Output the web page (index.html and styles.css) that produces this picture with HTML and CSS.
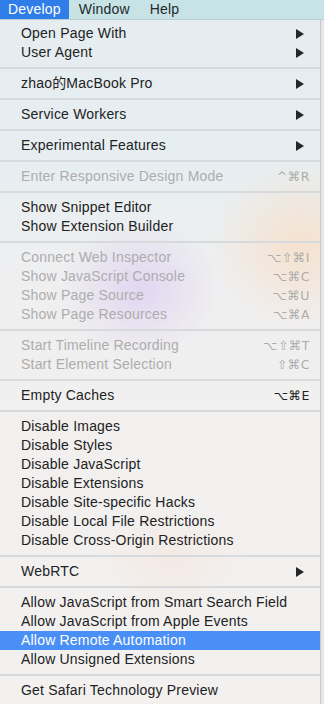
FILE: index.html
```html
<!DOCTYPE html>
<html>
<head>
<meta charset="utf-8">
<link rel="stylesheet" href="styles.css">
</head>
<body>
<div class="menubar">
  <span class="mb-item active">Develop</span>
  <span class="mb-item">Window</span>
  <span class="mb-item">Help</span>
</div>
<div class="screen">
  <div class="menu">
    <div class="item"><span class="label">Open Page With</span><span class="arrow"></span></div>
    <div class="item"><span class="label">User Agent</span><span class="arrow"></span></div>
    <div class="sep"></div>
    <div class="item"><span class="label">zhao的MacBook Pro</span><span class="arrow"></span></div>
    <div class="sep"></div>
    <div class="item"><span class="label">Service Workers</span><span class="arrow"></span></div>
    <div class="sep"></div>
    <div class="item"><span class="label">Experimental Features</span><span class="arrow"></span></div>
    <div class="sep"></div>
    <div class="item disabled"><span class="label">Enter Responsive Design Mode</span><span class="key">^⌘R</span></div>
    <div class="sep"></div>
    <div class="item"><span class="label">Show Snippet Editor</span></div>
    <div class="item"><span class="label">Show Extension Builder</span></div>
    <div class="sep"></div>
    <div class="item disabled"><span class="label">Connect Web Inspector</span><span class="key">⌥⇧⌘I</span></div>
    <div class="item disabled"><span class="label">Show JavaScript Console</span><span class="key">⌥⌘C</span></div>
    <div class="item disabled"><span class="label">Show Page Source</span><span class="key">⌥⌘U</span></div>
    <div class="item disabled"><span class="label">Show Page Resources</span><span class="key">⌥⌘A</span></div>
    <div class="sep"></div>
    <div class="item disabled"><span class="label">Start Timeline Recording</span><span class="key">⌥⇧⌘T</span></div>
    <div class="item disabled"><span class="label">Start Element Selection</span><span class="key">⇧⌘C</span></div>
    <div class="sep"></div>
    <div class="item"><span class="label">Empty Caches</span><span class="key">⌥⌘E</span></div>
    <div class="sep"></div>
    <div class="item"><span class="label">Disable Images</span></div>
    <div class="item"><span class="label">Disable Styles</span></div>
    <div class="item"><span class="label">Disable JavaScript</span></div>
    <div class="item"><span class="label">Disable Extensions</span></div>
    <div class="item"><span class="label">Disable Site-specific Hacks</span></div>
    <div class="item"><span class="label">Disable Local File Restrictions</span></div>
    <div class="item"><span class="label">Disable Cross-Origin Restrictions</span></div>
    <div class="sep"></div>
    <div class="item"><span class="label">WebRTC</span><span class="arrow"></span></div>
    <div class="sep"></div>
    <div class="item"><span class="label">Allow JavaScript from Smart Search Field</span></div>
    <div class="item"><span class="label">Allow JavaScript from Apple Events</span></div>
    <div class="item selected"><span class="label">Allow Remote Automation</span></div>
    <div class="item"><span class="label">Allow Unsigned Extensions</span></div>
    <div class="sep"></div>
    <div class="item"><span class="label">Get Safari Technology Preview</span></div>
  </div>
  <div class="behind"></div>
</div>
</body>
</html>
```
FILE: styles.css
```css
html, body {
  margin: 0;
  padding: 0;
}
body {
  width: 324px;
  height: 704px;
  overflow: hidden;
  font-family: "Liberation Sans", Arial, "Noto Sans CJK SC", sans-serif;
  font-size: 14px;
  letter-spacing: 0.2px;
  color: #222;
  background: #eef0f0;
}
.menubar {
  height: 20px;
  display: flex;
  align-items: stretch;
  background: #c8e3e6;
  box-sizing: border-box;
  border-bottom: 1px solid #b9cfd3;
}
.mb-item {
  display: flex;
  align-items: center;
  padding: 0 10px;
  color: #1e2a2c;
  line-height: 19px;
}
.mb-item.active {
  padding: 0 8px 0 8px;
  background: #2f7de8;
  color: #fff;
}
.screen {
  display: flex;
  height: 684px;
}
.menu {
  width: 320px;
  padding-top: 4px;
  border-right: 1px solid #c9c9c9;
  background:
    radial-gradient(ellipse 80px 70px at 140px 270px, rgba(216, 198, 242, 0.6), rgba(216, 198, 242, 0) 100%),
    radial-gradient(ellipse 90px 85px at 300px 225px, rgba(250, 218, 188, 0.65), rgba(250, 218, 188, 0) 100%),
    radial-gradient(ellipse 80px 50px at 170px 540px, rgba(248, 225, 215, 0.45), rgba(248, 225, 215, 0) 100%),
    linear-gradient(180deg, #e5edf1 0px, #e6eef1 130px, #efeff0 260px, #f1f0ef 400px, #f2f1f0 684px);
}
.behind {
  flex: 1;
  background: #e4e6e8;
}
.item {
  height: 19px;
  line-height: 19px;
  display: flex;
  align-items: center;
  padding: 0 13px 0 21px;
  white-space: nowrap;
}
.label {
  flex: 1;
}
.item.disabled {
  color: #adadad;
}
.item.selected {
  background: #4a8ff6;
  color: #fff;
}
.key {
  font-family: "DejaVu Sans", sans-serif;
  font-size: 12.5px;
  letter-spacing: 0.5px;
  margin-right: -3px;
}
.arrow {
  width: 0;
  height: 0;
  border-top: 5px solid transparent;
  border-bottom: 5px solid transparent;
  border-left: 8px solid #262626;
  margin-right: 3px;
}
.sep {
  height: 12px;
  display: flex;
  align-items: center;
}
.sep::before {
  content: "";
  display: block;
  width: 100%;
  height: 2px;
  background: #d7dadc;
}
```
